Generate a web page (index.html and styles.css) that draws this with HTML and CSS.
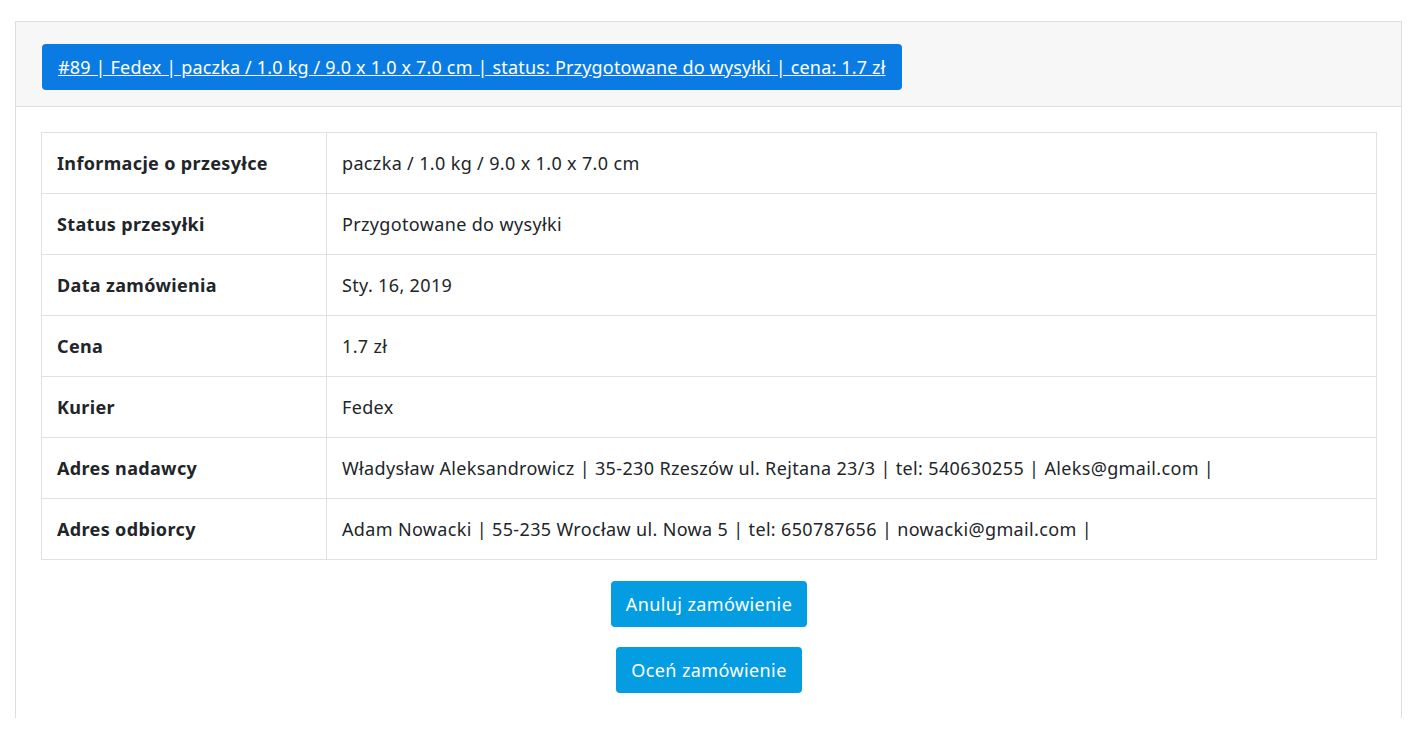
FILE: index.html
```html
<!DOCTYPE html>
<html lang="pl">
<head>
<meta charset="utf-8">
<title>Przesyłka #89</title>
<link rel="stylesheet" href="styles.css">
</head>
<body>
<div class="page">
  <div class="card">
    <div class="card-header">
      <a class="header-btn" href="#">#89 | Fedex | paczka / 1.0 kg / 9.0 x 1.0 x 7.0 cm | status: Przygotowane do wysyłki | cena: 1.7 zł</a>
    </div>
    <div class="card-body">
      <table class="info">
        <tr><th>Informacje o przesyłce</th><td>paczka / 1.0 kg / 9.0 x 1.0 x 7.0 cm</td></tr>
        <tr><th>Status przesyłki</th><td>Przygotowane do wysyłki</td></tr>
        <tr><th>Data zamówienia</th><td>Sty. 16, 2019</td></tr>
        <tr><th>Cena</th><td>1.7 zł</td></tr>
        <tr><th>Kurier</th><td>Fedex</td></tr>
        <tr><th>Adres nadawcy</th><td>Władysław Aleksandrowicz | 35-230 Rzeszów ul. Rejtana 23/3 | tel: 540630255 | Aleks@gmail.com |</td></tr>
        <tr><th>Adres odbiorcy</th><td>Adam Nowacki | 55-235 Wrocław ul. Nowa 5 | tel: 650787656 | nowacki@gmail.com |</td></tr>
      </table>
      <div class="actions">
        <button class="btn" type="button">Anuluj zamówienie</button>
        <button class="btn" type="button">Oceń zamówienie</button>
      </div>
    </div>
  </div>
</div>
</body>
</html>
```
FILE: styles.css
```css
html, body {
  margin: 0;
  padding: 0;
  background: #fff;
}
body {
  font-family: "Noto Sans", "Open Sans", sans-serif;
  font-size: 18px;
  letter-spacing: 0.35px;
  color: #212529;
}
.page {
  padding: 21px 18px 0 15px;
}
.card {
  border: 1px solid #dedede;
  border-bottom: none;
  height: 697px;
  box-sizing: border-box;
}
.card-header {
  background: #f7f7f7;
  border-bottom: 1px solid #dedede;
  padding: 22px 26px 16px;
  height: 85px;
  box-sizing: border-box;
}
.header-btn {
  display: inline-block;
  background: #0a7be2;
  color: #fff;
  border-radius: 4px;
  padding: 0 16px;
  height: 46px;
  line-height: 46px;
  letter-spacing: 0.18px;
  text-decoration: underline;
  white-space: nowrap;
}
.card-body {
  padding: 25px 24px 0 25px;
}
.info {
  width: 100%;
  border-collapse: collapse;
  border: 1px solid #dee2e6;
}
.info th, .info td {
  border: 1px solid #dee2e6;
  height: 61px;
  padding: 0 15px;
  text-align: left;
  vertical-align: middle;
  box-sizing: border-box;
}
.info th {
  width: 285px;
  font-weight: 700;
}
.info td {
  font-weight: 400;
}
.actions {
  display: flex;
  flex-direction: column;
  align-items: center;
  gap: 20px;
  padding-top: 21px;
}
.btn {
  font-family: inherit;
  font-size: 18px;
  letter-spacing: 0.4px;
  color: #fff;
  background: #049de2;
  border: none;
  border-radius: 4px;
  height: 46px;
  padding: 0 15px;
  cursor: pointer;
}
```
